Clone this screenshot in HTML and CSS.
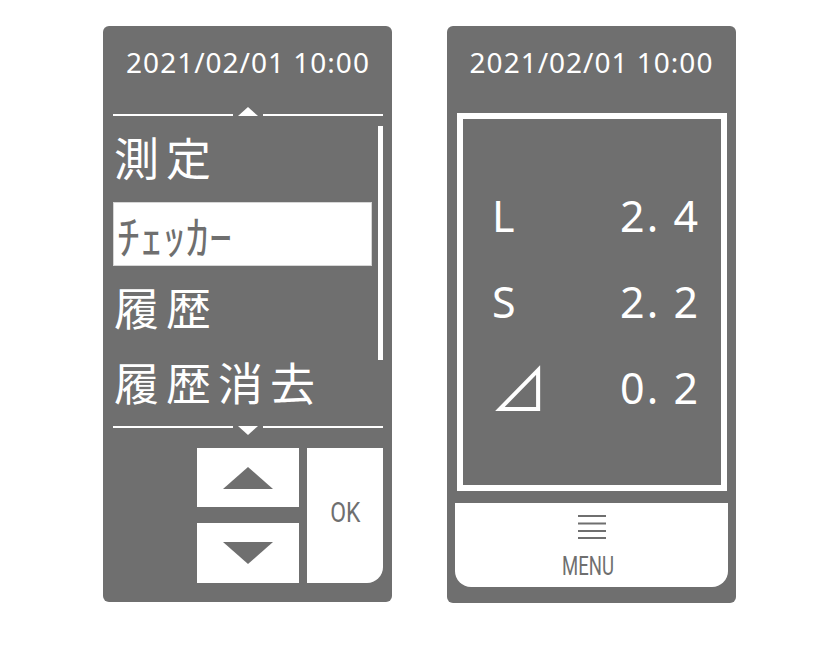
FILE: index.html
```html
<!DOCTYPE html>
<html lang="ja">
<head>
<meta charset="utf-8">
<title>Device screens</title>
<link rel="stylesheet" href="styles.css">
</head>
<body>
<div class="stage">
  <section class="panel panel-menu">
    <div class="clock">2021/02/01 10:00</div>
    <div class="sep sep-up"><span class="line"></span><span class="tri tri-up"></span><span class="line"></span></div>
    <div class="menu">
      <ul class="items">
        <li class="item">測定</li>
        <li class="item selected"><span class="kana">ﾁｪｯｶｰ</span></li>
        <li class="item">履歴</li>
        <li class="item">履歴消去</li>
      </ul>
      <div class="scrollbar"></div>
    </div>
    <div class="sep sep-down"><span class="line"></span><span class="tri tri-down"></span><span class="line"></span></div>
    <div class="controls">
      <div class="arrows">
        <button class="key key-up"><span class="arrow arrow-up"></span></button>
        <button class="key key-down"><span class="arrow arrow-down"></span></button>
      </div>
      <button class="key key-ok"><span class="narrow ok-text">OK</span></button>
    </div>
  </section>

  <section class="panel panel-result">
    <div class="clock">2021/02/01 10:00</div>
    <div class="frame">
      <div class="row"><span class="label">L</span><span class="value">2. 4</span></div>
      <div class="row"><span class="label">S</span><span class="value">2. 2</span></div>
      <div class="row"><span class="label delta">⊿</span><span class="value">0. 2</span></div>
    </div>
    <button class="menu-btn">
      <svg class="burger" width="28" height="24" viewBox="0 0 28 24" aria-hidden="true">
        <rect x="0" y="0" width="28" height="2" fill="#6f6f6f"/>
        <rect x="0" y="7.5" width="28" height="2" fill="#6f6f6f"/>
        <rect x="0" y="15" width="28" height="2" fill="#6f6f6f"/>
        <rect x="0" y="22" width="28" height="2" fill="#6f6f6f"/>
      </svg>
      <span class="narrow menu-text">MENU</span>
    </button>
  </section>
</div>
</body>
</html>
```

FILE: styles.css
```css
* { box-sizing: border-box; }

html, body {
  margin: 0;
  padding: 0;
  background: #ffffff;
}

.stage {
  display: flex;
  gap: 55px;
  padding: 26px 0 0 103px;
  font-family: "Noto Sans", "Noto Sans CJK JP", sans-serif;
}

.panel {
  width: 289px;
  background: #6f6f6f;
  border-radius: 6px;
  display: flex;
  flex-direction: column;
  color: #ffffff;
}

.panel-menu {
  height: 576px;
  padding: 22px 9px 19px 10px;
}

.panel-result {
  height: 577px;
  padding: 22px 8px 16px 8px;
}

.clock {
  height: 28px;
  line-height: 28px;
  font-size: 28px;
  letter-spacing: 1px;
  text-align: center;
  font-family: "Noto Sans", sans-serif;
}

/* separators with small arrow */
.sep {
  display: flex;
  gap: 5px;
  height: 9px;
}
.sep-up {
  margin-top: 31px;
  align-items: flex-end;
}
.sep-down {
  margin-top: 10px;
  align-items: flex-start;
}
.line {
  flex: 1;
  height: 2px;
  background: #ffffff;
}
.tri {
  width: 0;
  height: 0;
  border-left: 10px solid transparent;
  border-right: 10px solid transparent;
}
.tri-up { border-bottom: 9px solid #ffffff; }
.tri-down { border-top: 9px solid #ffffff; }

/* menu list */
.menu {
  display: flex;
  gap: 6px;
  margin-top: 11px;
}
.items {
  list-style: none;
  margin: 0;
  padding: 0;
  width: 259px;
  display: flex;
  flex-direction: column;
  gap: 11px;
}
.item {
  height: 64px;
  line-height: 60px;
  padding-left: 1px;
  font-family: "Noto Sans CJK JP", sans-serif;
  font-size: 45px;
  letter-spacing: 7px;
  white-space: nowrap;
  color: #ffffff;
}
.item.selected {
  background: #ffffff;
  border: 1px solid #d6d6d6;
  color: #6f6f6f;
  padding-left: 3px;
}
.kana {
  display: block;
  font-size: 46px;
  letter-spacing: 0;
  line-height: 62px;
}
.scrollbar {
  width: 5px;
  height: 234px;
  margin-top: -1px;
  background: #ffffff;
}

/* control keys */
.controls {
  margin-top: 13px;
  display: flex;
  justify-content: flex-end;
  gap: 8px;
  height: 135px;
}
.arrows {
  width: 102px;
  display: flex;
  flex-direction: column;
  gap: 16px;
}
.key {
  border: 0;
  margin: 0;
  padding: 0;
  background: #ffffff;
  display: flex;
  align-items: center;
  justify-content: center;
  color: #6f6f6f;
  font-family: "Roboto", sans-serif;
}
.key-up { height: 59px; }
.key-down { height: 60px; }
.key-ok {
  width: 76px;
  height: 135px;
  border-bottom-right-radius: 16px;
  padding-bottom: 6px;
}
.arrow {
  width: 0;
  height: 0;
  border-left: 25px solid transparent;
  border-right: 25px solid transparent;
}
.arrow-up { border-bottom: 22px solid #6f6f6f; }
.arrow-down { border-top: 22px solid #6f6f6f; }

.narrow {
  display: inline-block;
  transform: scaleX(0.82);
  line-height: 1;
}
.ok-text {
  font-size: 28px;
}

/* result screen */
.frame {
  margin: 37px 1px 0 2px;
  height: 378px;
  border: 6px solid #ffffff;
  padding: 54px 21px 0 29px;
  display: flex;
  flex-direction: column;
}
.row {
  height: 86px;
  display: flex;
  align-items: center;
  justify-content: space-between;
  font-family: "Noto Sans", sans-serif;
  font-size: 43px;
  line-height: 86px;
}
.value {
  letter-spacing: 2px;
}
.delta {
  font-family: "Noto Sans CJK JP", sans-serif;
  font-size: 58px;
  margin-left: -2px;
  margin-top: -4px;
}

.menu-btn {
  margin: 12px 0 0 0;
  height: 84px;
  border: 0;
  padding: 12px 0 0 0;
  background: #ffffff;
  border-bottom-left-radius: 16px;
  border-bottom-right-radius: 16px;
  display: flex;
  flex-direction: column;
  align-items: center;
  color: #6f6f6f;
  font-family: "Roboto", sans-serif;
}
.burger { display: block; }
.menu-text {
  margin-top: 15px;
  margin-right: 6px;
  font-size: 25px;
  transform: scaleX(0.74);
}
```
